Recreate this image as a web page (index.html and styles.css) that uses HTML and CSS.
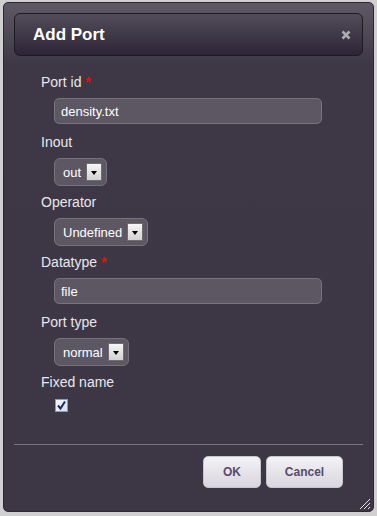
FILE: index.html
```html
<!DOCTYPE html>
<html lang="en">
<head>
    <meta charset="UTF-8">
    <title>Add Port</title>
    <link rel="stylesheet" href="styles.css">
</head>
<body>

    <div class="dialog">
        <div class="titlebar">
            <span class="title">Add Port</span>
            <span class="close">
                <svg width="10" height="10" viewBox="0 0 10 10"><path d="M1.5 1.5 L8.5 8.5 M8.5 1.5 L1.5 8.5" stroke="#aeabb3" stroke-width="2.6"/></svg>
            </span>
        </div>

        <div class="form">
            <div class="field">
                <label class="field-label">Port id <span class="req">*</span></label>
                <div class="text-input">density.txt</div>
            </div>
            <div class="field">
                <label class="field-label">Inout</label>
                <div class="select"><span>out</span><span class="arrow"></span></div>
            </div>
            <div class="field">
                <label class="field-label">Operator</label>
                <div class="select"><span>Undefined</span><span class="arrow"></span></div>
            </div>
            <div class="field">
                <label class="field-label">Datatype <span class="req">*</span></label>
                <div class="text-input">file</div>
            </div>
            <div class="field">
                <label class="field-label">Port type</label>
                <div class="select"><span>normal</span><span class="arrow"></span></div>
            </div>
            <div class="field">
                <label class="field-label">Fixed name</label>
                <span class="checkbox">
                    <svg width="11" height="11" viewBox="0 0 11 11"><path d="M2 5.5 L4.5 8.5 L9 1.5" fill="none" stroke="#1b2a6e" stroke-width="2"/></svg>
                </span>
            </div>
        </div>

        <div class="footer">
            <button class="btn btn-ok">OK</button>
            <button class="btn">Cancel</button>
        </div>

        <span class="grip">
            <svg width="12" height="12" viewBox="0 0 12 12"><path d="M1 11 L11 1 M5 11 L11 5 M9 11 L11 9" stroke="#e4e2e8" stroke-width="1"/></svg>
        </span>
    </div>

</body>
</html>
```

FILE: styles.css
```css
body {
    margin: 0;
    background-color: #d0d0d0;
    font-family: 'Liberation Sans', Arial, sans-serif;
}

.dialog {
    position: relative;
    box-sizing: border-box;
    width: 371px;
    height: 510px;
    margin: 2px 0 0 3px;
    padding: 10px;
    border: 1px solid #2c2733;
    border-radius: 5px;
    background: linear-gradient(#5e5964 0, #3e3846 62px, #3d3745 100%);
}

.titlebar {
    display: flex;
    align-items: center;
    justify-content: space-between;
    box-sizing: border-box;
    height: 43px;
    padding: 0 11px 0 18px;
    border: 1px solid #1e1a24;
    border-radius: 6px;
    background: linear-gradient(#524c5a, #2d2536);
}

.title {
    color: #fff;
    font-size: 17px;
    font-weight: bold;
}

.close {
    display: flex;
}

.form {
    padding: 18px 0 0 27px;
    height: 370px;
}

.field {
    height: 60px;
}

.field-label {
    display: block;
    font-size: 14px;
    line-height: 16px;
    color: #e9e7ec;
    margin-bottom: 8px;
}

.req {
    color: #ff0000;
    font-weight: bold;
}

.text-input {
    display: flex;
    align-items: center;
    box-sizing: border-box;
    width: 268px;
    height: 26px;
    margin-left: 13px;
    padding: 0 6px;
    border: 1px solid #78727f;
    border-radius: 5px;
    background-color: #5d5764;
    color: #fff;
    font-size: 13px;
}

.select {
    display: inline-flex;
    align-items: center;
    gap: 5px;
    box-sizing: border-box;
    height: 28px;
    margin-left: 13px;
    padding: 0 4px 0 8px;
    border: 1px solid #78727f;
    border-radius: 6px;
    background-color: #5d5764;
    color: #fff;
    font-size: 13px;
}

.arrow {
    position: relative;
    box-sizing: border-box;
    width: 16px;
    height: 18px;
    border: 1px solid #6e6e6e;
    background: linear-gradient(#f6f6f6, #d2d2d2);
}

.arrow::after {
    content: '';
    position: absolute;
    left: 4px;
    top: 7px;
    border-left: 3.5px solid transparent;
    border-right: 3.5px solid transparent;
    border-top: 4px solid #000;
}

.checkbox {
    display: flex;
    align-items: center;
    justify-content: center;
    box-sizing: border-box;
    width: 13px;
    height: 13px;
    margin: 9px 0 0 14px;
    border: 1px solid #7f9fc4;
    background: linear-gradient(135deg, #f4f8fc, #d6e2ef);
}

.footer {
    display: flex;
    justify-content: flex-end;
    gap: 5px;
    padding: 11px 20px 0 0;
    border-top: 1px solid #7b7581;
}

.btn {
    height: 32px;
    width: 77px;
    border: 1px solid #c9c5cf;
    border-radius: 5px;
    background: linear-gradient(#f3f2f5, #d9d6de);
    color: #574b6c;
    font-family: 'Liberation Sans', Arial, sans-serif;
    font-size: 12px;
    font-weight: bold;
    cursor: pointer;
}

.btn-ok {
    width: 58px;
}

.grip {
    position: absolute;
    right: 2px;
    bottom: 1px;
    display: flex;
}
```
